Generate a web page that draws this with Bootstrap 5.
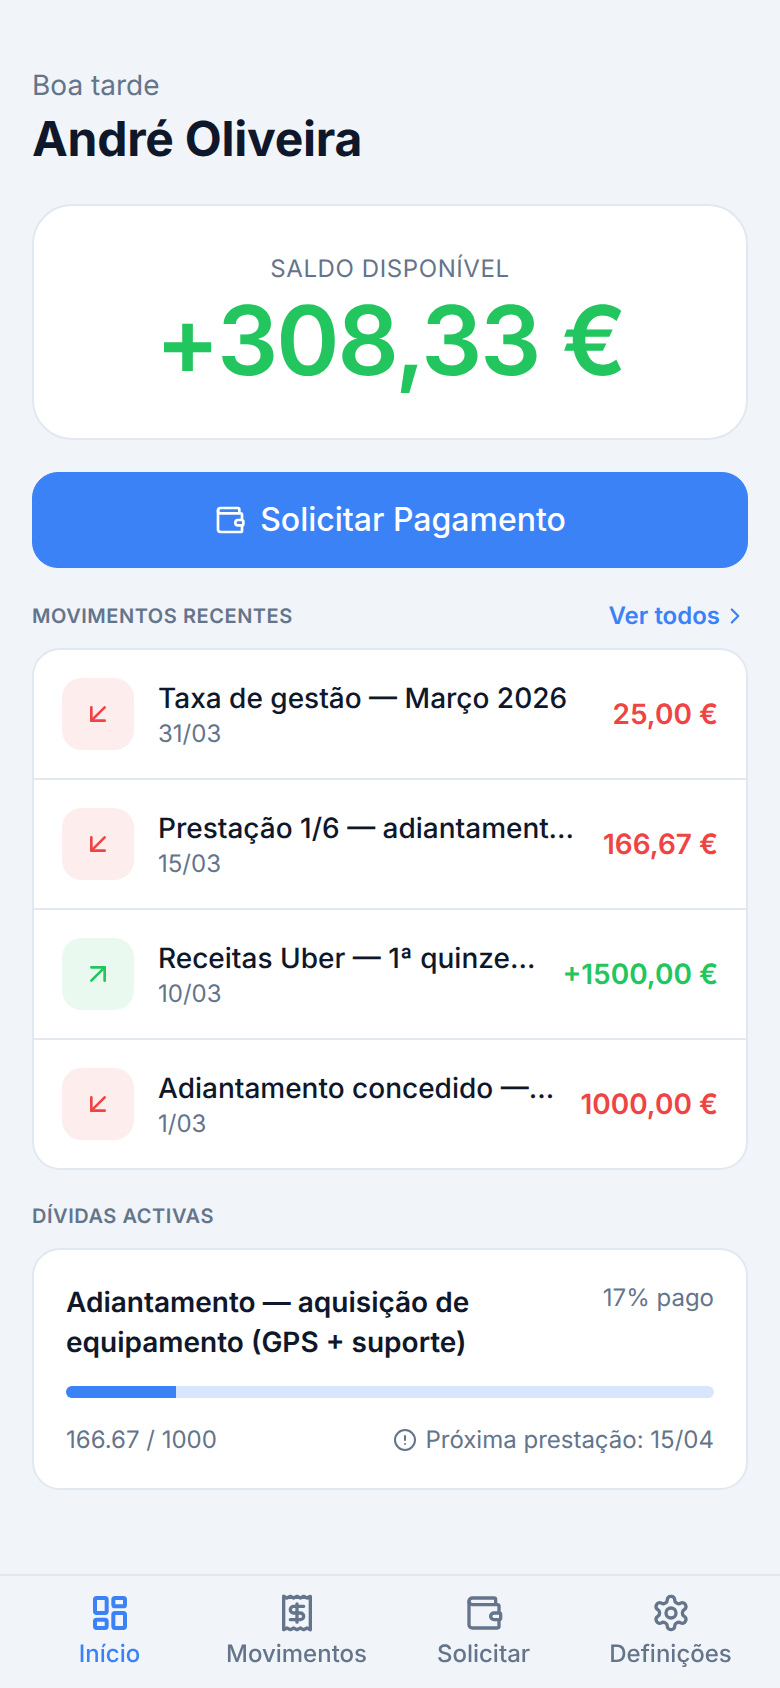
<!DOCTYPE html>
<html lang="pt">
<head>
    <meta charset="UTF-8">
    <meta name="viewport" content="width=device-width, initial-scale=1.0">
    <title>Início</title>
    <link rel="stylesheet" href="https://cdn.jsdelivr.net/npm/bootstrap@5.3.3/dist/css/bootstrap.min.css">
    <script src="https://cdn.jsdelivr.net/npm/bootstrap@5.3.3/dist/js/bootstrap.bundle.min.js"></script>
    <style>
        body{
            --bs-body-color: #0f172a;
            font-family: Inter, "Liberation Sans", sans-serif;
            background-color: #f1f5f9;
            color: #0f172a;
            text-rendering: geometricPrecision;
        }
        .page-wrap{
            padding: 69px 32px 0;
        }
        .greeting{
            font-size: 28px;
            line-height: 32px;
            color: #64748b;
        }
        .user-name{
            font-size: 48px;
            line-height: 60px;
            font-weight: 700;
            letter-spacing: -0.25px;
            margin: 8px 0 35px;
        }
        .balance-card{
            border: 2px solid #e2e8f0;
            border-radius: 40px;
            height: 236px;
            padding-top: 48px;
        }
        .balance-label{
            font-size: 24px;
            line-height: 30px;
            letter-spacing: 0.6px;
            color: #64748b;
        }
        .balance-value{
            font-size: 96px;
            line-height: 114px;
            font-weight: 600;
            letter-spacing: -2px;
            color: #22c55e;
        }
        .pay-btn{
            --bs-btn-bg: #3b82f6;
            --bs-btn-border-color: #3b82f6;
            --bs-btn-hover-bg: #2f74e6;
            --bs-btn-hover-border-color: #2f74e6;
            height: 96px;
            margin-top: 32px;
            border-radius: 26px;
            font-size: 32px;
            font-weight: 500;
            gap: 14px;
        }
        .section-head{
            margin: 32px 0 16px;
            height: 32px;
        }
        .debts-head{
            margin-top: 30px;
        }
        .section-label{
            font-size: 20px;
            font-weight: 600;
            letter-spacing: 0.55px;
            color: #64748b;
        }
        .see-all{
            font-size: 24px;
            font-weight: 600;
            color: #3b82f6;
            text-decoration: none;
            gap: 2px;
        }
        .moves-list{
            --bs-list-group-color: #0f172a;
            --bs-list-group-border-color: #e2e8f0;
            --bs-list-group-border-width: 2px;
            --bs-list-group-border-radius: 28px;
            --bs-list-group-item-padding-x: 28px;
            --bs-list-group-item-padding-y: 28px;
        }
        .move-icon{
            width: 72px;
            height: 72px;
            border-radius: 20px;
            flex-shrink: 0;
        }
        .icon-out{ background-color: #fdeded; color: #ef4444; }
        .icon-in{ background-color: #e9f9ef; color: #22c55e; }
        .move-text{
            padding-top: 2px;
        }
        .move-title{
            font-size: 28px;
            line-height: 36px;
            font-weight: 500;
        }
        .move-date{
            font-size: 24px;
            line-height: 32px;
            margin-top: 2px;
            color: #64748b;
        }
        .move-amount{
            font-size: 28px;
            font-weight: 600;
            white-space: nowrap;
        }
        .amount-out{ color: #ef4444; }
        .amount-in{ color: #22c55e; }
        .debt-card{
            --bs-card-color: #0f172a;
            border: 2px solid #e2e8f0;
            border-radius: 28px;
            padding: 32px;
            height: 242px;
        }
        .debt-title{
            font-size: 28px;
            line-height: 40px;
            font-weight: 600;
            max-width: 460px;
        }
        .debt-pct, .debt-foot{
            font-size: 24px;
            line-height: 32px;
            color: #64748b;
        }
        .debt-progress{
            --bs-progress-height: 16px;
            --bs-progress-bg: #d8e6fd;
            --bs-progress-bar-bg: #3b82f6;
            --bs-progress-border-radius: 8px;
            margin: 24px 0 26px;
        }
        .bottom-bar{
            position: fixed;
            left: 0;
            right: 0;
            bottom: 0;
            height: 114px;
            border-top: 2px solid #e2e8f0;
            padding: 17px 16px 0;
        }
        .tab-link{
            font-size: 24px;
            line-height: 32px;
            font-weight: 500;
            color: #64748b;
            text-decoration: none;
            gap: 5px;
        }
        .tab-link.active{ color: #3b82f6; }
    </style>
</head>
<body>
    <main class="page-wrap">
        <div class="greeting">Boa tarde</div>
        <h1 class="user-name">André Oliveira</h1>

        <div class="card balance-card text-center">
            <div class="balance-label">SALDO DISPONÍVEL</div>
            <div class="balance-value">+308,33 €</div>
        </div>

        <button class="btn btn-primary pay-btn w-100 d-flex align-items-center justify-content-center">
            <svg width="32" height="32" viewBox="0 0 24 24" fill="none" stroke="currentColor" stroke-width="2" stroke-linecap="round" stroke-linejoin="round"><path d="M19 7V4a1 1 0 0 0-1-1H5a2 2 0 0 0 0 4h15a1 1 0 0 1 1 1v4h-3a2 2 0 0 0 0 4h3a1 1 0 0 0 1-1v-2a1 1 0 0 0-1-1"/><path d="M3 5v14a2 2 0 0 0 2 2h15a1 1 0 0 0 1-1v-4"/></svg>
            Solicitar Pagamento
        </button>

        <div class="section-head d-flex justify-content-between align-items-center">
            <span class="section-label">MOVIMENTOS RECENTES</span>
            <a class="see-all d-flex align-items-center" href="#">Ver todos
                <svg width="26" height="26" viewBox="0 0 24 24" fill="none" stroke="currentColor" stroke-width="2" stroke-linecap="round" stroke-linejoin="round"><path d="m9 18 6-6-6-6"/></svg>
            </a>
        </div>

        <ul class="list-group moves-list">
            <li class="list-group-item d-flex align-items-center gap-4">
                <div class="move-icon icon-out d-flex align-items-center justify-content-center">
                    <svg width="32" height="32" viewBox="0 0 24 24" fill="none" stroke="currentColor" stroke-width="2" stroke-linecap="round" stroke-linejoin="round"><path d="M17 7 7 17"/><path d="M17 17H7V7"/></svg>
                </div>
                <div class="move-text flex-grow-1 overflow-hidden">
                    <div class="move-title text-truncate">Taxa de gestão — Março 2026</div>
                    <div class="move-date">31/03</div>
                </div>
                <div class="move-amount amount-out">25,00 €</div>
            </li>
            <li class="list-group-item d-flex align-items-center gap-4">
                <div class="move-icon icon-out d-flex align-items-center justify-content-center">
                    <svg width="32" height="32" viewBox="0 0 24 24" fill="none" stroke="currentColor" stroke-width="2" stroke-linecap="round" stroke-linejoin="round"><path d="M17 7 7 17"/><path d="M17 17H7V7"/></svg>
                </div>
                <div class="move-text flex-grow-1 overflow-hidden">
                    <div class="move-title text-truncate">Prestação 1/6 — adiantamento GPS</div>
                    <div class="move-date">15/03</div>
                </div>
                <div class="move-amount amount-out">166,67 €</div>
            </li>
            <li class="list-group-item d-flex align-items-center gap-4">
                <div class="move-icon icon-in d-flex align-items-center justify-content-center">
                    <svg width="32" height="32" viewBox="0 0 24 24" fill="none" stroke="currentColor" stroke-width="2" stroke-linecap="round" stroke-linejoin="round"><path d="M7 17 17 7"/><path d="M7 7h10v10"/></svg>
                </div>
                <div class="move-text flex-grow-1 overflow-hidden">
                    <div class="move-title text-truncate">Receitas Uber — 1ª quinzena Março</div>
                    <div class="move-date">10/03</div>
                </div>
                <div class="move-amount amount-in">+1500,00 €</div>
            </li>
            <li class="list-group-item d-flex align-items-center gap-4">
                <div class="move-icon icon-out d-flex align-items-center justify-content-center">
                    <svg width="32" height="32" viewBox="0 0 24 24" fill="none" stroke="currentColor" stroke-width="2" stroke-linecap="round" stroke-linejoin="round"><path d="M17 7 7 17"/><path d="M17 17H7V7"/></svg>
                </div>
                <div class="move-text flex-grow-1 overflow-hidden">
                    <div class="move-title text-truncate">Adiantamento concedido — GPS + suporte</div>
                    <div class="move-date">1/03</div>
                </div>
                <div class="move-amount amount-out">1000,00 €</div>
            </li>
        </ul>

        <div class="section-head debts-head d-flex align-items-center">
            <span class="section-label">DÍVIDAS ACTIVAS</span>
        </div>

        <div class="card debt-card">
            <div class="d-flex justify-content-between align-items-start">
                <div class="debt-title">Adiantamento — aquisição de equipamento (GPS + suporte)</div>
                <div class="debt-pct">17% pago</div>
            </div>
            <div class="progress debt-progress">
                <div class="progress-bar" style="width: 17%"></div>
            </div>
            <div class="debt-foot d-flex justify-content-between align-items-center">
                <span>166.67 / 1000</span>
                <span class="d-flex align-items-center gap-2">
                    <svg width="24" height="24" viewBox="0 0 24 24" fill="none" stroke="currentColor" stroke-width="2" stroke-linecap="round" stroke-linejoin="round"><circle cx="12" cy="12" r="10"/><line x1="12" x2="12" y1="8" y2="12"/><line x1="12" x2="12.01" y1="16" y2="16"/></svg>
                    Próxima prestação: 15/04
                </span>
            </div>
        </div>
    </main>

    <nav class="bottom-bar row g-0">
        <a class="tab-link active col-3 d-flex flex-column align-items-center" href="#">
            <svg width="40" height="40" viewBox="0 0 24 24" fill="none" stroke="currentColor" stroke-width="2.4" stroke-linecap="round" stroke-linejoin="round"><rect width="7" height="9" x="3" y="3" rx="1"/><rect width="7" height="5" x="14" y="3" rx="1"/><rect width="7" height="9" x="14" y="12" rx="1"/><rect width="7" height="5" x="3" y="16" rx="1"/></svg>
            Início
        </a>
        <a class="tab-link col-3 d-flex flex-column align-items-center" href="#">
            <svg width="40" height="40" viewBox="0 0 24 24" fill="none" stroke="currentColor" stroke-width="2" stroke-linecap="round" stroke-linejoin="round"><path d="M4 2v20l2-1 2 1 2-1 2 1 2-1 2 1 2-1 2 1V2l-2 1-2-1-2 1-2-1-2 1-2-1-2 1Z"/><path d="M16 8h-6a2 2 0 1 0 0 4h4a2 2 0 1 1 0 4H8"/><path d="M12 17.5v-11"/></svg>
            Movimentos
        </a>
        <a class="tab-link col-3 d-flex flex-column align-items-center" href="#">
            <svg width="40" height="40" viewBox="0 0 24 24" fill="none" stroke="currentColor" stroke-width="2" stroke-linecap="round" stroke-linejoin="round"><path d="M19 7V4a1 1 0 0 0-1-1H5a2 2 0 0 0 0 4h15a1 1 0 0 1 1 1v4h-3a2 2 0 0 0 0 4h3a1 1 0 0 0 1-1v-2a1 1 0 0 0-1-1"/><path d="M3 5v14a2 2 0 0 0 2 2h15a1 1 0 0 0 1-1v-4"/></svg>
            Solicitar
        </a>
        <a class="tab-link col-3 d-flex flex-column align-items-center" href="#">
            <svg width="40" height="40" viewBox="0 0 24 24" fill="none" stroke="currentColor" stroke-width="2" stroke-linecap="round" stroke-linejoin="round"><path d="M12.22 2h-.44a2 2 0 0 0-2 2v.18a2 2 0 0 1-1 1.73l-.43.25a2 2 0 0 1-2 0l-.15-.08a2 2 0 0 0-2.73.73l-.22.38a2 2 0 0 0 .73 2.73l.15.1a2 2 0 0 1 1 1.72v.51a2 2 0 0 1-1 1.74l-.15.09a2 2 0 0 0-.73 2.73l.22.38a2 2 0 0 0 2.73.73l.15-.08a2 2 0 0 1 2 0l.43.25a2 2 0 0 1 1 1.73V20a2 2 0 0 0 2 2h.44a2 2 0 0 0 2-2v-.18a2 2 0 0 1 1-1.73l.43-.25a2 2 0 0 1 2 0l.15.08a2 2 0 0 0 2.73-.73l.22-.39a2 2 0 0 0-.73-2.73l-.15-.08a2 2 0 0 1-1-1.74v-.5a2 2 0 0 1 1-1.74l.15-.09a2 2 0 0 0 .73-2.73l-.22-.38a2 2 0 0 0-2.73-.73l-.15.08a2 2 0 0 1-2 0l-.43-.25a2 2 0 0 1-1-1.73V4a2 2 0 0 0-2-2z"/><circle cx="12" cy="12" r="3"/></svg>
            Definições
        </a>
    </nav>
</body>
</html>
